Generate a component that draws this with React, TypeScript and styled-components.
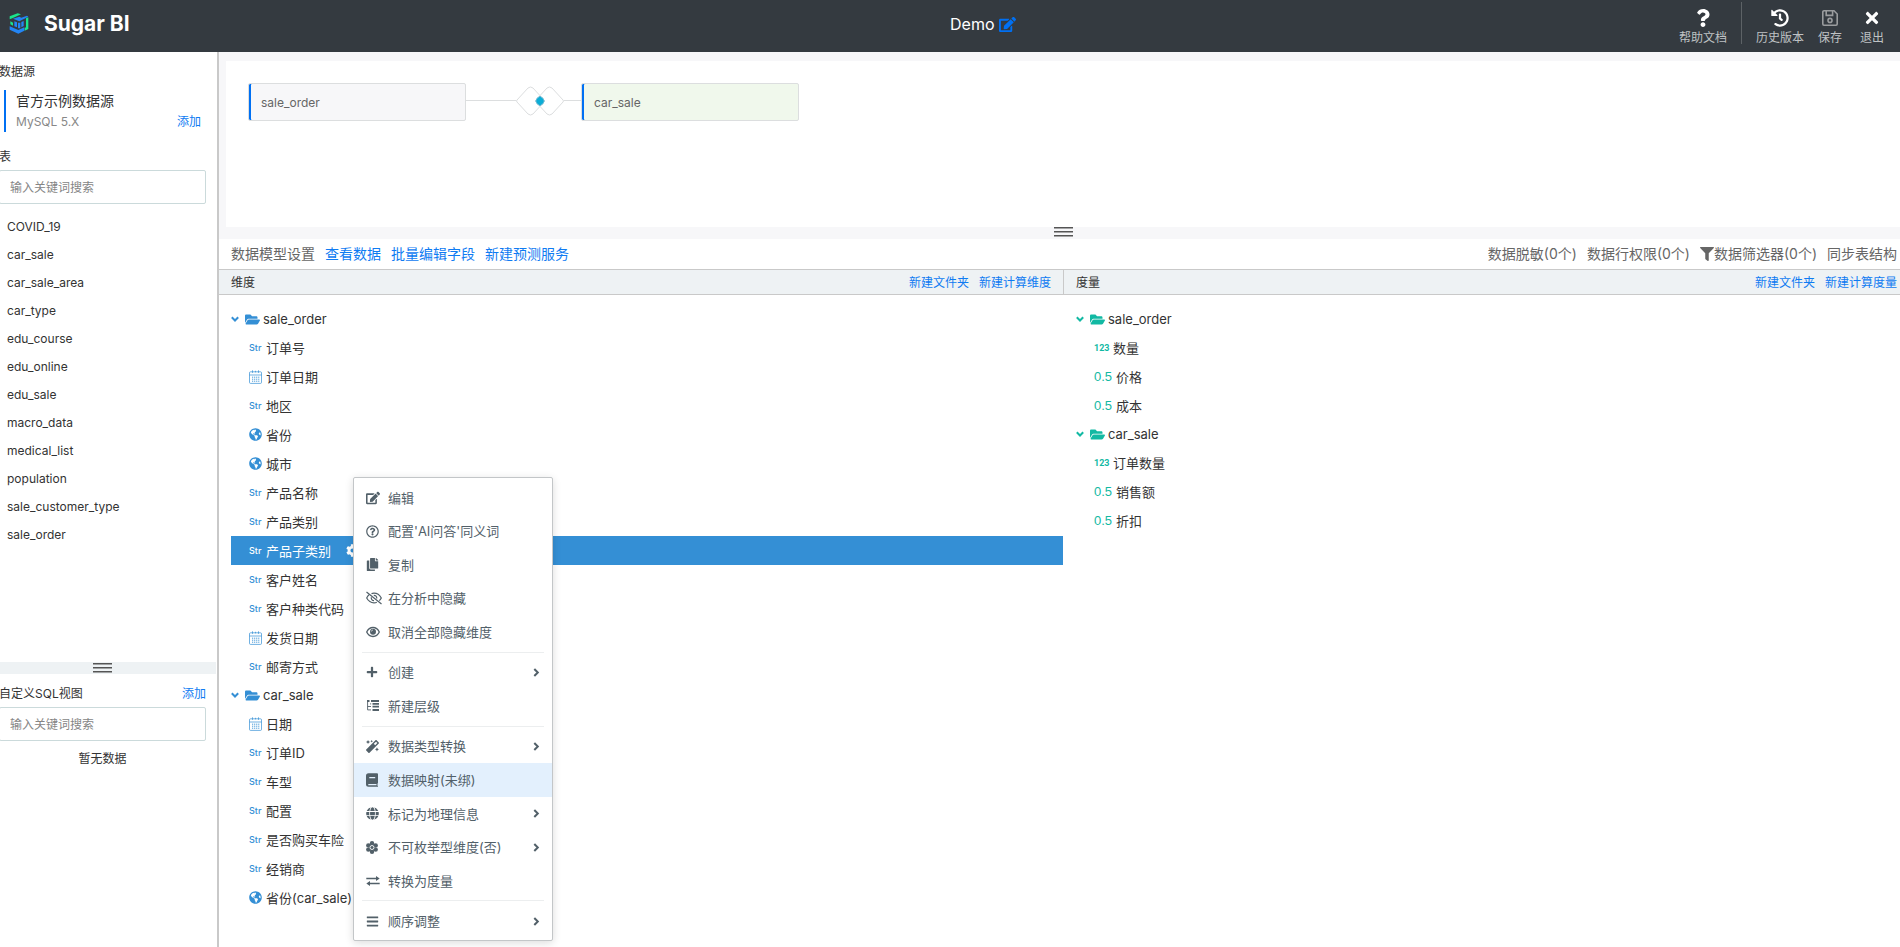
import React from "react";
import styled, { createGlobalStyle } from "styled-components";
import {
  FaBars,
  FaCog,
  FaCopy,
  FaEdit,
  FaFilter,
  FaFolderOpen,
  FaGlobe,
  FaGlobeAmericas,
  FaHistory,
  FaMagic,
  FaPlus,
  FaQuestion,
  FaRegQuestionCircle,
  FaTimes,
} from "react-icons/fa";

const color = {
  header: "#343a40",
  link: "#0f7bf2",
  accent: "#0070f3",
  dimension: "#348fd5",
  measure: "#12b9a3",
  text: "#333",
  muted: "#666",
  line: "#c9c9c9",
  strip: "#eef2f4",
  canvas: "#f7f7f9",
  menu: "#526069",
};

const GlobalStyle = createGlobalStyle`
  *, *::before, *::after { box-sizing: border-box; }
  body {
    margin: 0;
    font-family: Inter, "Noto Sans CJK SC", sans-serif;
    font-size: 12px;
    line-height: 18px;
    color: ${color.text};
    background: #fff;
  }
  button, input { font: inherit; color: inherit; }
  button { margin: 0; padding: 0; border: 0; background: none; cursor: pointer; text-align: left; white-space: nowrap; }
  ul { list-style: none; margin: 0; padding: 0; }
  h1, h2, h3 { margin: 0; font-size: inherit; font-weight: 400; }
  svg { display: block; flex: none; }
`;

const Page = styled.div`
  display: flex;
  flex-direction: column;
  height: 100vh;
  overflow: hidden;
`;

/* ---------- header ---------- */

const Header = styled.header`
  display: grid;
  grid-template-columns: 1fr 1fr;
  flex: none;
  height: 52px;
  background: ${color.header};
  color: #fff;
`;

const Brand = styled.div`
  display: flex;
  align-items: center;
  gap: 15px;
  padding: 0 0 5px 9px;
`;

const BrandName = styled.h1`
  font-size: 21px;
  line-height: 24px;
  font-weight: 700;
`;

const HeaderRight = styled.div`
  display: flex;
  justify-content: space-between;
`;

const DocTitle = styled.div`
  display: flex;
  align-items: center;
  gap: 5px;
  padding-bottom: 4px;
  font-size: 16px;
  line-height: 24px;
`;

const TitleEdit = styled.button`
  color: ${color.accent};
`;

const Actions = styled.nav`
  display: flex;
  align-items: flex-start;
  padding: 2px 16px 0 0;
`;

const Action = styled.button<{ $dim?: boolean; $wide?: boolean }>`
  display: flex;
  flex-direction: column;
  align-items: center;
  gap: 2px;
  padding: 7px 0 0 ${(p) => (p.$wide ? 18 : 14)}px;
  color: #bfc2c4;
  & > span:first-child {
    display: flex;
    align-items: center;
    justify-content: center;
    height: 18px;
    color: ${(p) => (p.$dim ? "#9a9c9e" : "#fff")};
  }
`;

const ActionDivider = styled.i`
  width: 1px;
  height: 42px;
  margin-left: 14px;
  background: #5d6266;
`;

/* ---------- body ---------- */

const Body = styled.div`
  display: flex;
  flex: 1;
  min-height: 0;
`;

const Sidebar = styled.aside`
  display: grid;
  grid-template-rows: 1fr 12px 273px;
  flex: none;
  width: 219px;
  border-right: 2px solid ${color.line};
  overflow: hidden;
`;

const SideSection = styled.section`
  margin-left: -1px;
  padding: 11px 11px 0 0;
  overflow: hidden;
`;

const SideHeading = styled.div`
  display: flex;
  justify-content: space-between;
`;

const LinkButton = styled.button<{ $size?: number; $color?: string }>`
  font-size: ${(p) => p.$size ?? 12}px;
  color: ${(p) => p.$color ?? color.link};
`;

const Source = styled.div`
  display: grid;
  grid-template-columns: 1fr auto;
  grid-template-rows: 21px 21px;
  margin: 9px 5px 16px 5px;
  padding-left: 10px;
  border-left: 2px solid ${color.accent};
  line-height: 22px;
`;

const SourceName = styled.div`
  grid-column: 1 / -1;
  font-size: 14px;
`;

const SourceKind = styled.span`
  color: #888;
`;

const SearchInput = styled.input`
  display: block;
  width: 100%;
  height: 34px;
  margin: 4px 0 9px;
  padding: 0 10px;
  border: 1px solid #cbdadb;
  border-radius: 2px;
  background: #fff;
  outline: none;
  &::placeholder {
    color: #858585;
    opacity: 1;
  }
`;

const TableItem = styled.button`
  display: block;
  width: 100%;
  padding: 5px 8px;
`;

const EmptyNote = styled.p`
  margin: 0;
  text-align: center;
`;

const SideSplitter = styled.div`
  display: flex;
  justify-content: center;
  margin-right: 1px;
  padding: 1px 11px 0 0;
  background: ${color.strip};
`;

const Main = styled.main`
  display: flex;
  flex-direction: column;
  flex: 1;
  min-width: 0;
`;

const CanvasWrap = styled.section`
  flex: none;
  padding: 9px 0 0 7px;
  background: ${color.canvas};
`;

const Canvas = styled.div`
  display: flex;
  align-items: flex-start;
  height: 166px;
  padding: 22px;
  background: #fff;
`;

const TableNode = styled.button<{ $green?: boolean }>`
  width: 218px;
  height: 38px;
  padding: 2px 0 0 12px;
  border: 1px solid #dcdedf;
  border-radius: 2px;
  box-shadow: inset 2px 0 0 ${color.accent};
  background: ${(p) => (p.$green ? "#f0f8ec" : color.canvas)};
  color: ${color.muted};
`;

const CanvasSplitter = styled.div`
  display: flex;
  justify-content: center;
  height: 12px;
`;

const ModelBar = styled.div`
  display: flex;
  justify-content: space-between;
  flex: none;
  height: 30px;
  padding: 0 3px 0 12px;
  line-height: 30px;
  color: ${color.muted};
`;

const BarGroup = styled.div`
  display: flex;
  gap: 10px;
  font-size: 14px;
`;

const FilterButton = styled(LinkButton)`
  display: flex;
  align-items: center;
`;

const ColumnHeads = styled.div`
  display: grid;
  grid-template-columns: 1fr 1fr;
  flex: none;
  height: 26px;
  padding-left: 7px;
  border: solid ${color.line};
  border-width: 1px 0;
  background: ${color.strip};
  line-height: 26px;
`;

const ColumnHead = styled.div<{ $second?: boolean }>`
  display: flex;
  justify-content: space-between;
  height: 24px;
  padding: ${(p) => (p.$second ? "0 3px 0 12px" : "0 12px 0 5px")};
  border-left: ${(p) => (p.$second ? `1px solid ${color.line}` : "0")};
`;

const HeadLinks = styled.div`
  display: flex;
  align-items: flex-start;
  gap: 10px;
`;

const Columns = styled.div`
  display: grid;
  grid-template-columns: 1fr 1fr;
  flex: 1;
  padding: 10px 0 0 7px;
`;

const Tree = styled.ul<{ $second?: boolean }>`
  padding-left: ${(p) => (p.$second ? 13 : 5)}px;
  font-size: 13px;
`;

const FolderRow = styled.button<{ $color: string }>`
  display: flex;
  align-items: center;
  width: 100%;
  height: 28px;
  & > svg {
    color: ${(p) => p.$color};
  }
  & > svg + svg {
    margin: 0 3px 0 6px;
  }
`;

const FieldItem = styled.li`
  position: relative;
`;

const FieldRow = styled.button<{ $color: string; $selected?: boolean }>`
  display: flex;
  align-items: center;
  gap: 4px;
  width: 100%;
  height: 29px;
  padding-left: 18px;
  background: ${(p) => (p.$selected ? color.dimension : "transparent")};
  color: ${(p) => (p.$selected ? "#fff" : color.text)};
  & > :first-child {
    color: ${(p) => (p.$selected ? "#fff" : p.$color)};
  }
  & > span + svg {
    margin-left: 11px;
  }
`;

const StrMark = styled.span`
  width: 13px;
  font-size: 9px;
  font-weight: 500;
`;

const IntMark = styled.span`
  width: 15px;
  font-family: Roboto, sans-serif;
  font-size: 9px;
  font-weight: 700;
`;

const FloatMark = styled.span`
  width: 18px;
  font-family: "Liberation Sans", Arial, sans-serif;
  font-size: 13px;
`;

/* ---------- context menu ---------- */

const Menu = styled.div`
  position: absolute;
  z-index: 2;
  top: -59px;
  left: 122px;
  display: flex;
  flex-direction: column;
  width: 200px;
  height: 464px;
  padding: 3px 0 2px;
  border: 1px solid #c3c6c8;
  border-radius: 2px;
  background: #fff;
  box-shadow: 0 2px 8px rgba(0, 0, 0, 0.14);
  color: ${color.menu};
`;

const MenuItem = styled.button<{ $active?: boolean }>`
  display: flex;
  align-items: center;
  flex: 1;
  padding: 0 12px;
  background: ${(p) => (p.$active ? "#e3f0fd" : "transparent")};
  & > span:nth-child(2) {
    flex: 1;
  }
`;

const MenuIcon = styled.span`
  display: flex;
  width: 22px;
`;

const MenuRule = styled.hr`
  width: 182px;
  height: 1px;
  margin: 3px 8px;
  border: 0;
  background: #eceeef;
`;

/* ---------- drawings ---------- */

const Logo = () => (
  <svg width="20" height="21" viewBox="0 0 60 63">
    <path d="M2 10 26 1 36 4 10 16 2 19Z" fill="#19e68c" />
    <path d="M12 17 31 11 37 14 54 8 58 11 31 25Z" fill="#2385f5" />
    <path d="M58 13v35L47 53v-8l4-2V16Z" fill="#19e68c" />
    <path d="M4 25 12 29v9L4 34Z" fill="#19e68c" />
    <path d="M2 40 28 51 46 43v10L28 62 2 50Z" fill="#2385f5" />
    <path d="M16 25l8 3v15l-8-3ZM27 29h7v17h-7ZM37 27l7-3v15l-7 4Z" fill="#2385f5" />
  </svg>
);

const Grip = () => (
  <svg width="19" height="11" viewBox="0 0 19 11" fill="#555">
    <path d="M0 0h19v1.500H0zM0 4h19v1.500H0zM0 8h19v1.500H0z" />
  </svg>
);

const ChevronDown = () => (
  <svg width="8" height="7" viewBox="0 0 8 7" fill="none" stroke="currentColor" strokeWidth="2">
    <path d="M.8 1.300 4 4.500 7.200 1.300" />
  </svg>
);

const ChevronRight = () => (
  <svg width="7" height="9" viewBox="0 0 7 9" fill="none" stroke="currentColor" strokeWidth="2">
    <path d="M1.300 1 4.800 4.500 1.300 8" />
  </svg>
);

const SaveIcon = () => (
  <svg width="16" height="16" viewBox="0 0 16 16" fill="none" stroke="currentColor" strokeWidth="1.6">
    <path d="M2 .8h10L15.200 4v10a1.200 1.200 0 0 1-1.200 1.200H2A1.200 1.200 0 0 1 .8 14V2A1.200 1.200 0 0 1 2 .8Z" />
    <path d="M4.200 1v4.400h6.400V1" />
    <circle cx="8" cy="10.400" r="2" />
  </svg>
);

const CalendarIcon = () => (
  <svg width="13" height="14" viewBox="0 0 13 14" fill="none" stroke="currentColor" strokeWidth="0.7">
    <rect x="0.500" y="1.800" width="12" height="11.600" rx="1" />
    <path d="M.5 5h12M3.500.3v2.600M9.500.3v2.600M6.500.8v1.600" />
    <path d="M3 7.200h7.400M3 9.200h7.400M3 11.200h7.400" strokeWidth="0.9" strokeDasharray="1.200 0.850" />
  </svg>
);

const JoinIcon = () => (
  <svg width="115" height="38" viewBox="0 0 115 38" fill="none" stroke="#dcdedf">
    <path d="M0 17.500h50M98 17.500h17" />
    <path d="M51 17 62 5q2.500-2 5 0l11 12q1 1 0 2L67 31q-2.500 2-5 0L51 19q-1-1 0-2Z" />
    <path d="M70 17 81 5q2.500-2 5 0l11 12q1 1 0 2L86 31q-2.500 2-5 0L70 19q-1-1 0-2Z" />
    <path d="M74 13.200Q77.800 15 78.200 18 77.800 21 74 22.800 70.200 21 69.800 18 70.200 15 74 13.200Z" fill="#0badd6" stroke="#6db9d4" />
  </svg>
);

const EyeIcon = () => (
  <svg width="14" height="12" viewBox="0 0 14 12" fill="none" stroke="currentColor" strokeWidth="1.3">
    <path d="M.7 6C2 3.200 4.300 1.500 7 1.500S12 3.200 13.300 6C12 8.800 9.700 10.500 7 10.500S2 8.800.7 6Z" />
    <circle cx="7" cy="5.700" r="3" fill="currentColor" stroke="none" />
    <path d="M5.400 5.500A1.600 1.600 0 0 1 6.900 4" stroke="#fff" strokeWidth="0.7" />
  </svg>
);

const EyeOffIcon = () => (
  <svg width="16" height="14" viewBox="0 0 16 14" fill="none" stroke="currentColor" strokeWidth="1.2">
    <path d="M.5 1 15.500 13" />
    <path d="M3 3.800C1.900 4.800 1.200 6 .7 7c1.500 2.800 4 4.800 7.300 4.800 1 0 2-.2 2.800-.6M5.500 2.600C6.300 2.300 7.100 2.200 8 2.200c3.300 0 5.800 2 7.300 4.800-.5 1-1.200 1.900-2 2.700" />
    <path d="M5.400 6.200A2.700 2.700 0 0 0 8 9.700M7.800 4.300a2.700 2.700 0 0 1 2.900 3.200" />
  </svg>
);

const BookIcon = () => (
  <svg width="12" height="14" viewBox="0 0 12 14">
    <path
      d="M2.500.3H11a1 1 0 0 1 1 1v8.400a1 1 0 0 1-.5.9v2.100l.5.3v.7H2.500A2.500 2.500 0 0 1 0 11.200V2.800A2.500 2.500 0 0 1 2.500.3Z"
      fill="currentColor"
    />
    <path d="M3.300 4.700h5.900M2.300 11.600h8.200" fill="none" stroke="#e3f0fd" strokeWidth="1.200" />
  </svg>
);

const LevelIcon = () => (
  <svg width="13" height="12" viewBox="0 0 13 12" fill="currentColor">
    <path d="M1 0h2.500v2H1zM5 0h8v2H5zM6.500 3H13v1.800H6.500zM6.500 5.700H13v1.800H6.500zM6.500 9H13v2H6.500z" />
    <path d="M1.600 2v7.900H5M1.600 6.500H5M4 3.900h1.200" fill="none" stroke="currentColor" strokeWidth="0.9" />
  </svg>
);

const FlowerIcon = () => (
  <svg width="12" height="13" viewBox="0 0 12 13" fill="currentColor">
    <circle cx="6" cy="2.300" r="2.200" />
    <circle cx="6" cy="10.700" r="2.200" />
    <circle cx="2.300" cy="4.400" r="2.200" />
    <circle cx="9.700" cy="4.400" r="2.200" />
    <circle cx="2.300" cy="8.600" r="2.200" />
    <circle cx="9.700" cy="8.600" r="2.200" />
    <circle cx="6" cy="6.500" r="3.400" />
    <circle cx="6" cy="6.500" r="2" fill="none" stroke="#fff" strokeWidth="0.9" />
  </svg>
);

const SwapIcon = () => (
  <svg width="14" height="10" viewBox="0 0 14 10" fill="currentColor">
    <path d="M.3 1.700h9.700V0l3.700 2.500L10 5V3.300H.3zM13.700 6.700H4V5L.3 7.500 4 10V8.300h9.700z" />
  </svg>
);

/* ---------- data ---------- */

const tables = [
  "COVID_19",
  "car_sale",
  "car_sale_area",
  "car_type",
  "edu_course",
  "edu_online",
  "edu_sale",
  "macro_data",
  "medical_list",
  "population",
  "sale_customer_type",
  "sale_order",
];

type Kind = "str" | "date" | "geo" | "int" | "float";
type Field = [Kind, string];
type Folder = { name: string; fields: Field[] };

const dimensions: Folder[] = [
  {
    name: "sale_order",
    fields: [
      ["str", "订单号"],
      ["date", "订单日期"],
      ["str", "地区"],
      ["geo", "省份"],
      ["geo", "城市"],
      ["str", "产品名称"],
      ["str", "产品类别"],
      ["str", "产品子类别"],
      ["str", "客户姓名"],
      ["str", "客户种类代码"],
      ["date", "发货日期"],
      ["str", "邮寄方式"],
    ],
  },
  {
    name: "car_sale",
    fields: [
      ["date", "日期"],
      ["str", "订单ID"],
      ["str", "车型"],
      ["str", "配置"],
      ["str", "是否购买车险"],
      ["str", "经销商"],
      ["geo", "省份(car_sale)"],
    ],
  },
];

const measures: Folder[] = [
  { name: "sale_order", fields: [["int", "数量"], ["float", "价格"], ["float", "成本"]] },
  { name: "car_sale", fields: [["int", "订单数量"], ["float", "销售额"], ["float", "折扣"]] },
];

type Entry = { icon: React.ReactNode; label: string; sub?: boolean; active?: boolean };

const menuGroups: Entry[][] = [
  [
    { icon: <FaEdit size={14} />, label: "编辑" },
    { icon: <FaRegQuestionCircle size={13} />, label: "配置'AI问答'同义词" },
    { icon: <FaCopy size={13} />, label: "复制" },
    { icon: <EyeOffIcon />, label: "在分析中隐藏" },
    { icon: <EyeIcon />, label: "取消全部隐藏维度" },
  ],
  [
    { icon: <FaPlus size={12} />, label: "创建", sub: true },
    { icon: <LevelIcon />, label: "新建层级" },
  ],
  [
    { icon: <FaMagic size={13} />, label: "数据类型转换", sub: true },
    { icon: <BookIcon />, label: "数据映射(未绑)", active: true },
    { icon: <FaGlobe size={13} />, label: "标记为地理信息", sub: true },
    { icon: <FlowerIcon />, label: "不可枚举型维度(否)", sub: true },
    { icon: <SwapIcon />, label: "转换为度量" },
  ],
  [{ icon: <FaBars size={13} />, label: "顺序调整", sub: true }],
];

const KindMark = ({ kind }: { kind: Kind }) => {
  if (kind === "str") return <StrMark>Str</StrMark>;
  if (kind === "int") return <IntMark>123</IntMark>;
  if (kind === "float") return <FloatMark>0.5</FloatMark>;
  if (kind === "date") return <CalendarIcon />;
  return <FaGlobeAmericas size={13} />;
};

const ContextMenu = () => (
  <Menu role="menu">
    {menuGroups.map((group, i) => (
      <React.Fragment key={i}>
        {i > 0 && <MenuRule />}
        {group.map((e) => (
          <MenuItem key={e.label} role="menuitem" $active={e.active}>
            <MenuIcon>{e.icon}</MenuIcon>
            <span>{e.label}</span>
            {e.sub && <ChevronRight />}
          </MenuItem>
        ))}
      </React.Fragment>
    ))}
  </Menu>
);

type TreeProps = { folders: Folder[]; tint: string; selected?: string; second?: boolean };

const FieldTree = ({ folders, tint, selected, second }: TreeProps) => (
  <Tree $second={second}>
    {folders.map((folder) => (
      <li key={folder.name}>
        <FolderRow $color={tint}>
          <ChevronDown />
          <FaFolderOpen size={15} />
          {folder.name}
        </FolderRow>
        <ul>
          {folder.fields.map(([kind, label]) => (
            <FieldItem key={label}>
              <FieldRow $color={tint} $selected={label === selected}>
                <KindMark kind={kind} />
                <span>{label}</span>
                {label === selected && <FaCog size={13} />}
              </FieldRow>
              {label === selected && <ContextMenu />}
            </FieldItem>
          ))}
        </ul>
      </li>
    ))}
  </Tree>
);

export default function App() {
  return (
    <Page>
      <GlobalStyle />
      <Header>
        <Brand>
          <Logo />
          <BrandName>Sugar BI</BrandName>
        </Brand>
        <HeaderRight>
          <DocTitle>
            <span>Demo</span>
            <TitleEdit aria-label="编辑名称">
              <FaEdit size={17} />
            </TitleEdit>
          </DocTitle>
          <Actions>
            <Action>
              <span><FaQuestion size={18} /></span>
              <span>帮助文档</span>
            </Action>
            <ActionDivider />
            <Action>
              <span><FaHistory size={18} /></span>
              <span>历史版本</span>
            </Action>
            <Action $dim>
              <span><SaveIcon /></span>
              <span>保存</span>
            </Action>
            <Action $wide>
              <span><FaTimes size={18} /></span>
              <span>退出</span>
            </Action>
          </Actions>
        </HeaderRight>
      </Header>

      <Body>
        <Sidebar>
          <SideSection>
            <SideHeading>
              <h2>数据源</h2>
            </SideHeading>
            <Source>
              <SourceName>官方示例数据源</SourceName>
              <SourceKind>MySQL 5.X</SourceKind>
              <LinkButton>添加</LinkButton>
            </Source>
            <label htmlFor="table-search">表</label>
            <SearchInput id="table-search" placeholder="输入关键词搜索" />
            <ul>
              {tables.map((name) => (
                <li key={name}>
                  <TableItem>{name}</TableItem>
                </li>
              ))}
            </ul>
          </SideSection>
          <SideSplitter>
            <Grip />
          </SideSplitter>
          <SideSection>
            <SideHeading>
              <label htmlFor="view-search">自定义SQL视图</label>
              <LinkButton>添加</LinkButton>
            </SideHeading>
            <SearchInput id="view-search" placeholder="输入关键词搜索" />
            <EmptyNote>暂无数据</EmptyNote>
          </SideSection>
        </Sidebar>

        <Main>
          <CanvasWrap>
            <Canvas>
              <TableNode>sale_order</TableNode>
              <JoinIcon />
              <TableNode $green>car_sale</TableNode>
            </Canvas>
            <CanvasSplitter>
              <Grip />
            </CanvasSplitter>
          </CanvasWrap>

          <ModelBar>
            <BarGroup>
              <span>数据模型设置</span>
              <LinkButton $size={14}>查看数据</LinkButton>
              <LinkButton $size={14}>批量编辑字段</LinkButton>
              <LinkButton $size={14}>新建预测服务</LinkButton>
            </BarGroup>
            <BarGroup>
              <LinkButton $size={14} $color={color.muted}>数据脱敏(0个)</LinkButton>
              <LinkButton $size={14} $color={color.muted}>数据行权限(0个)</LinkButton>
              <FilterButton $size={14} $color={color.muted}>
                <FaFilter size={14} />
                数据筛选器(0个)
              </FilterButton>
              <LinkButton $size={14} $color={color.muted}>同步表结构</LinkButton>
            </BarGroup>
          </ModelBar>

          <ColumnHeads>
            <ColumnHead>
              <h3>维度</h3>
              <HeadLinks>
                <LinkButton>新建文件夹</LinkButton>
                <LinkButton>新建计算维度</LinkButton>
              </HeadLinks>
            </ColumnHead>
            <ColumnHead $second>
              <h3>度量</h3>
              <HeadLinks>
                <LinkButton>新建文件夹</LinkButton>
                <LinkButton>新建计算度量</LinkButton>
              </HeadLinks>
            </ColumnHead>
          </ColumnHeads>

          <Columns>
            <FieldTree folders={dimensions} tint={color.dimension} selected="产品子类别" />
            <FieldTree folders={measures} tint={color.measure} second />
          </Columns>
        </Main>
      </Body>
    </Page>
  );
}
